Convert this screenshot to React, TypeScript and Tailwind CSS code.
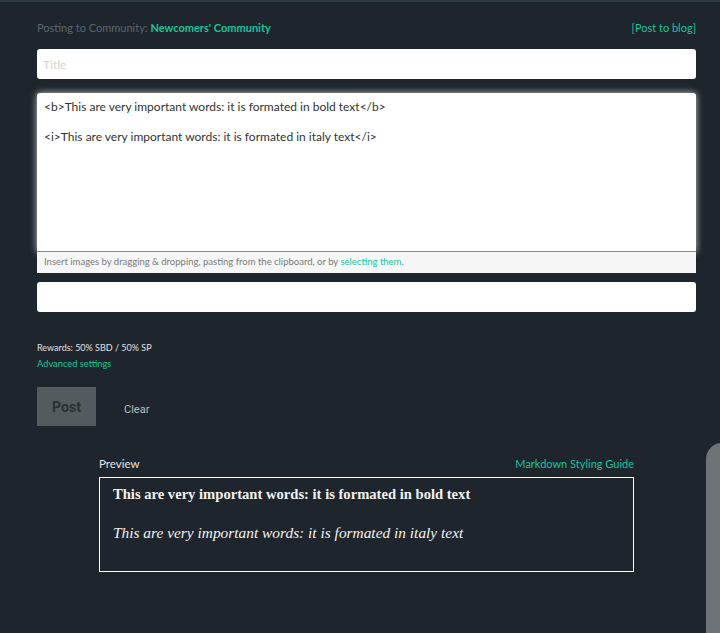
import { useState } from "react";

const teal = "text-[#1cc39b]";

export default function App() {
  const [body, setBody] = useState(
    "<b>This are very important words: it is formated in bold text</b>\n\n<i>This are very important words: it is formated in italy text</i>"
  );

  return (
    <div className="relative h-[633px] w-[720px] overflow-hidden bg-[#1e252c] font-['Lato',sans-serif] border-t-2 border-[#2b3943]">
      <div className="flex flex-col pl-[37px] pr-[24px]">
        {/* header */}
        <div className="mt-[18px] flex h-4 items-center justify-between text-[11px]">
          <span className="text-[#5d666e]">
            Posting to Community:{" "}
            <span className={`font-bold ${teal}`}>Newcomers' Community</span>
          </span>
          <span className={teal}>[Post to blog]</span>
        </div>

        <input
          className="mt-[13px] h-[30px] rounded-[3px] bg-white px-[6px] text-[12px] text-[#333] outline-none placeholder:text-[#d4d4d4]"
          placeholder="Title"
        />

        <div className="mt-[14px] flex flex-col">
          <textarea
            className="h-[159px] resize-none rounded-t-[3px] border-b border-[#8a8a8a] bg-white px-[7px] pt-[6px] text-[12px] leading-[15px] text-[#333] shadow-[0_0_7px_rgba(255,255,255,0.75)] outline-none"
            value={body}
            onChange={(e) => setBody(e.target.value)}
          />
          <div className="flex h-[21px] items-center bg-[#f6f6f6] px-[7px] text-[9.5px] text-[#7b7b7b]">
            Insert images by dragging &amp; dropping, pasting from the clipboard, or by&nbsp;
            <span className={teal}>selecting them</span>.
          </div>
        </div>

        <input className="mt-[9px] h-[30px] rounded-[3px] bg-white px-[6px] text-[12px] outline-none" />

        <div className="mt-[29px] text-[9px] leading-[14px] text-[#e0e0e0]">
          Rewards: 50% SBD / 50% SP
        </div>
        <div className={`mt-[2px] text-[9.3px] leading-[14px] ${teal}`}>Advanced settings</div>

        <div className="mt-[16px] flex items-center gap-[28px]">
          <button className="h-[39px] w-[59px] bg-[#545b5f] pt-[2px] font-['Roboto',sans-serif] text-[14px] font-bold text-[#2a3037]">
            Post
          </button>
          <span className="mt-[8px] font-['Roboto',sans-serif] text-[11px] text-[#b8bcc0]">Clear</span>
        </div>

        {/* preview */}
        <div className="mt-[31px] ml-[62px] mr-[62px] flex flex-col">
          <div className="flex items-end justify-between">
            <span className="text-[11.5px] leading-[14px] text-[#e3e3e3]">Preview</span>
            <span className={`text-[11px] leading-[14px] ${teal}`}>Markdown Styling Guide</span>
          </div>
          <div className="mt-[6px] h-[95px] border border-white px-[13px] pt-[6px] font-['Liberation_Serif',serif] text-[#f2f2f2]">
            <p className="text-[14.6px] font-bold">This are very important words: it is formated in bold text</p>
            <p className="mt-[15px] text-[15.4px] italic">This are very important words: it is formated in italy text</p>
          </div>
        </div>
      </div>

      {/* floating panel edge */}
      <div className="absolute left-[706px] top-[441px] h-[220px] w-[40px] rounded-tl-[16px] bg-[#6d7377]" />
    </div>
  );
}
